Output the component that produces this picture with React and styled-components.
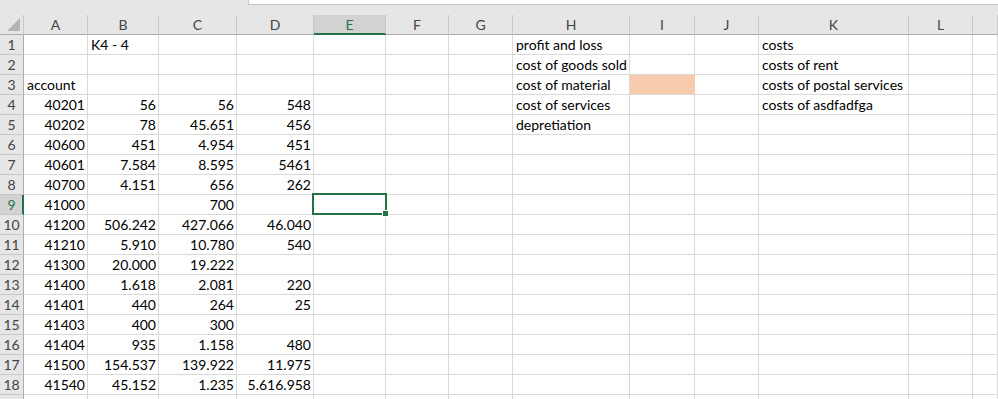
import React from "react"
import styled, { createGlobalStyle, css } from "styled-components"

const GlobalStyle = createGlobalStyle`
  html, body {
    margin: 0;
    padding: 0;
    background: #e6e6e6;
    overflow: hidden;
  }
  body {
    font-family: Lato, "Open Sans", sans-serif;
    font-size: 14px;
    color: #000;
  }
`

const GREEN = '#217346'

const Page = styled.div`
  display: flex;
  flex-direction: column;
  width: 998px;
  height: 399px;
  overflow: hidden;
`

const TopStrip = styled.div`
  flex: none;
  display: flex;
  height: 15px;
  background: #e6e6e6;
`

const FormulaBar = styled.div`
  margin-left: 248px;
  flex: 1;
  height: 4px;
  background: #fff;
  border-left: 1px solid #c6c6c6;
  border-bottom: 1px solid #c6c6c6;
`

const Sheet = styled.div`
  flex: none;
  display: grid;
  grid-template-columns: 24px 64px 71px 78px 77px 72px 63px 64px 117px 65px 64px 150px 64px 1fr;
  grid-auto-rows: 20px;
  background: #fff;
`

const Corner = styled.div`
  display: flex;
  align-items: flex-end;
  justify-content: flex-end;
  padding: 0 3px 3px 0;
  background: #e6e6e6;
  border-right: 1px solid #c8c8c8;
  border-bottom: 1px solid #ababab;
`

const ColHeader = styled.div`
  display: flex;
  align-items: center;
  justify-content: center;
  background: ${p => (p.$active ? '#d2d2d2' : '#e6e6e6')};
  color: ${p => (p.$active ? GREEN : '#444')};
  border-right: 1px solid #c8c8c8;
  border-bottom: ${p => (p.$active ? `2px solid ${GREEN}` : '1px solid #ababab')};
  padding-top: ${p => (p.$active ? '1px' : '0')};
`

const RowHeader = styled.div`
  display: flex;
  align-items: center;
  justify-content: center;
  background: ${p => (p.$active ? '#d2d2d2' : '#e6e6e6')};
  color: ${p => (p.$active ? GREEN : '#444')};
  border-right: ${p => (p.$active ? `2px solid ${GREEN}` : '1px solid #ababab')};
  border-bottom: 1px solid #c8c8c8;
  padding-left: ${p => (p.$active ? '1px' : '0')};
`

const Cell = styled.div`
  position: relative;
  display: flex;
  align-items: center;
  justify-content: ${p => (p.$num ? 'flex-end' : 'flex-start')};
  padding: 0 2px 0 3px;
  white-space: nowrap;
  border-right: 1px solid #d9d9d9;
  border-bottom: 1px solid #d9d9d9;
  background: ${p => p.$fill || '#fff'};
  ${p => p.$fill && css`border-right-color: ${p.$fill};`}
`

const Selection = styled.div`
  position: absolute;
  left: -2px;
  top: -2px;
  right: -2px;
  bottom: -1px;
  border: 2px solid ${GREEN};
  pointer-events: none;
  z-index: 2;

  &::after {
    content: '';
    position: absolute;
    right: -4px;
    bottom: -4px;
    width: 5px;
    height: 5px;
    background: ${GREEN};
    border: 1px solid #fff;
  }
`

const columns = ['A', 'B', 'C', 'D', 'E', 'F', 'G', 'H', 'I', 'J', 'K', 'L', '']

const data = [
  { B: 'K4 - 4', H: 'profit and loss', K: 'costs' },
  { H: 'cost of goods sold', K: 'costs of rent' },
  { A: 'account', H: 'cost of material', K: 'costs of postal services', fillI: '#f8cbad' },
  { A: 40201, B: '56', C: '56', D: '548', H: 'cost of services', K: 'costs of asdfadfga' },
  { A: 40202, B: '78', C: '45.651', D: '456', H: 'depretiation' },
  { A: 40600, B: '451', C: '4.954', D: '451' },
  { A: 40601, B: '7.584', C: '8.595', D: '5461' },
  { A: 40700, B: '4.151', C: '656', D: '262' },
  { A: 41000, C: '700' },
  { A: 41200, B: '506.242', C: '427.066', D: '46.040' },
  { A: 41210, B: '5.910', C: '10.780', D: '540' },
  { A: 41300, B: '20.000', C: '19.222' },
  { A: 41400, B: '1.618', C: '2.081', D: '220' },
  { A: 41401, B: '440', C: '264', D: '25' },
  { A: 41403, B: '400', C: '300' },
  { A: 41404, B: '935', C: '1.158', D: '480' },
  { A: 41500, B: '154.537', C: '139.922', D: '11.975' },
  { A: 41540, B: '45.152', C: '1.235', D: '5.616.958' },
  { hideLabel: true },
]

const numeric = v => typeof v === 'number' || /^[\d.]+$/.test(v || '')

const SelectAll = () => (
  <svg width="13" height="13" viewBox="0 0 13 13">
    <polygon points="13,0 13,13 0,13" fill="#b4b4b4" />
  </svg>
)

const App = () => {
  const activeCol = 'E'
  const activeRow = 9

  return (
    <Page>
      <GlobalStyle />
      <TopStrip>
        <FormulaBar />
      </TopStrip>
      <Sheet>
        <Corner>
          <SelectAll />
        </Corner>
        {columns.map((c, i) => (
          <ColHeader key={i} $active={c === activeCol}>{c}</ColHeader>
        ))}
        {data.map((row, r) => (
          <React.Fragment key={r}>
            <RowHeader $active={r + 1 === activeRow}>{row.hideLabel ? '' : r + 1}</RowHeader>
            {columns.map((c, i) => {
              const v = row[c]
              const fill = c === 'I' ? row.fillI : undefined
              return (
                <Cell key={i} $num={numeric(v)} $fill={fill}>
                  {v}
                  {c === activeCol && r + 1 === activeRow && <Selection />}
                </Cell>
              )
            })}
          </React.Fragment>
        ))}
      </Sheet>
    </Page>
  )
}

export default App
